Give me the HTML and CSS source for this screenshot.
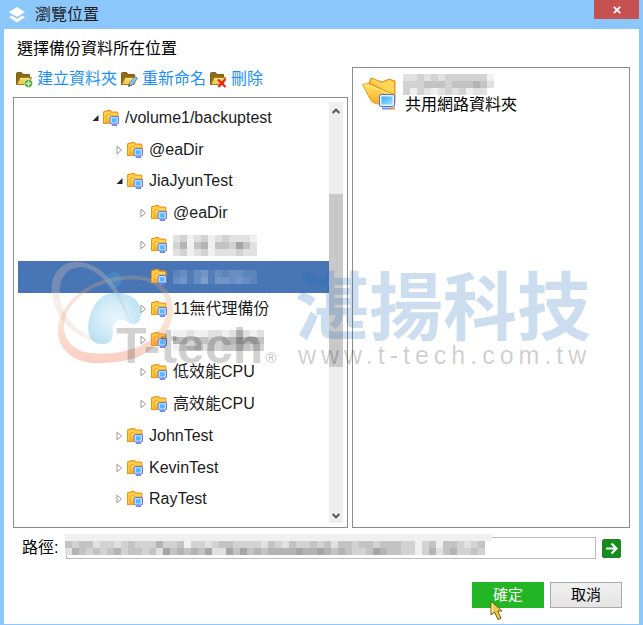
FILE: index.html
```html
<!DOCTYPE html>
<html lang="zh-Hant">
<head>
    <meta charset="UTF-8">
    <meta name="viewport" content="width=device-width, initial-scale=1.0">
    <title>瀏覽位置</title>
    <link rel="stylesheet" href="styles.css">
</head>
<body>
    <!-- Shared icons -->
    <svg class="sprite" aria-hidden="true">
        <defs>
            <linearGradient id="gold" x1="0" y1="0" x2="0" y2="1">
                <stop offset="0" stop-color="#ffe56a"/>
                <stop offset="1" stop-color="#f9a81a"/>
            </linearGradient>
            <linearGradient id="screen" x1="0" y1="0" x2="1" y2="1">
                <stop offset="0" stop-color="#35adf8"/>
                <stop offset="1" stop-color="#9fe2ff"/>
            </linearGradient>
        </defs>
        <symbol id="shared" viewBox="0 0 16 16">
            <path d="M.6 13.400V2.600q0-1.200 1.200-1.200h1.700l.8-.8h3l.9 1.600h5.600q1 0 1 1V13.400z" fill="#ffd24a" stroke="#ef9419" stroke-width="1.200"/>
            <path d="M3.200 13.500V6q0-1.200 1.200-1.200h3L8.300 6h7v7.500z" fill="url(#gold)" stroke="#f0a020"/>
            <rect x="7" y="6.500" width="8.500" height="7.500" rx="1.500" fill="#c9d6ff" stroke="#5b78e0"/>
            <rect x="9" y="8.300" width="4.600" height="4" fill="#45bdff"/>
            <path d="M9 15.200h5" stroke="#6c83e0" stroke-width="1.600"/>
        </symbol>
        <symbol id="folder" viewBox="0 0 16 16">
            <path d="M.5 13.500V2.500q0-1 1-1h4l1.500 2h6.500v3L11 13.500z" fill="#8d6a17" stroke="#80601a"/>
            <path d="M1 13.500L4 6.500h11.500L13 13.500z" fill="#f2cf58" stroke="#a47c1c"/>
            <path d="M4.800 7.800h8.500" stroke="#fff0a9"/>
        </symbol>
        <symbol id="closed" viewBox="0 0 7 10">
            <path d="M1 1.200v7.600L5.500 5z" fill="#fff" stroke="#999"/>
        </symbol>
        <symbol id="opened" viewBox="0 0 7 10">
            <path d="M6.500 2v6H.5z" fill="#262626"/>
        </symbol>
    </svg>

    <div class="window">
        <header class="titlebar">
            <svg class="app-icon" viewBox="0 0 16 16" aria-hidden="true">
                <path d="M8 0l8 5-8 5-8-5z" fill="#fff"/>
                <path d="M2.500 8.500L0 10.200 8 15.500l8-5.300-2.500-1.700L8 12z" fill="#fff"/>
            </svg>
            <h1>瀏覽位置</h1>
            <button class="close-btn" type="button" aria-label="關閉">
                <svg viewBox="0 0 8 8"><path d="M.8.8l6.400 6.400M7.200.8L.8 7.200" stroke="#fff" stroke-width="1.800"/></svg>
            </button>
        </header>

        <main class="content">
            <div class="browser">
                <section class="source">
                    <h2>選擇備份資料所在位置</h2>
                    <nav class="toolbar">
                        <a href="#">
                            <svg viewBox="0 0 17 17" aria-hidden="true"><use href="#folder" width="16" height="16"/><circle cx="12.500" cy="12.500" r="4" fill="#2fa51d" stroke="#fff" stroke-width=".6"/><path d="M12.500 9.800v5.400M9.800 12.500h5.400" stroke="#dfffc9" stroke-width="1.600"/></svg>建立資料夾</a>
                        <a href="#">
                            <svg viewBox="0 0 17 17" aria-hidden="true"><use href="#folder" width="16" height="16"/><path d="M7.500 15.500l1-3.500 5.500-6.500 2.500 2-5.500 6.700z" fill="#8ec5ee" stroke="#53789c" stroke-width=".8"/><path d="M7.500 15.500l.8-2.500 1.700 1.300z" fill="#444"/></svg>重新命名</a>
                        <a href="#">
                            <svg viewBox="0 0 17 17" aria-hidden="true"><use href="#folder" width="16" height="16"/><path d="M8 8.500l7.500 7.500M15.500 8L8.500 16" stroke="#ee2414" stroke-width="2.200"/></svg>刪除</a>
                    </nav>
                    <div class="tree-panel">
                        <div class="tree-view">
                            <ul class="tree">
                                <li class="level-1"><svg class="arrow"><use href="#opened"/></svg><svg class="icon"><use href="#shared"/></svg>/volume1/backuptest</li>
                                <li class="level-2"><svg class="arrow"><use href="#closed"/></svg><svg class="icon"><use href="#shared"/></svg>@eaDir</li>
                                <li class="level-2"><svg class="arrow"><use href="#opened"/></svg><svg class="icon"><use href="#shared"/></svg>JiaJyunTest</li>
                                <li class="level-3"><svg class="arrow"><use href="#closed"/></svg><svg class="icon"><use href="#shared"/></svg>@eaDir</li>
                                <li class="level-3"><svg class="arrow"><use href="#closed"/></svg><svg class="icon"><use href="#shared"/></svg><svg class="mosaic" data-cells="edfedfedeeef dbfcbfccdace edfedfeeedee"></svg></li>
                                <li class="level-3 selected"><svg class="arrow"></svg><svg class="icon"><use href="#shared"/></svg><svg class="mosaic" data-cells="edfdcfdeddee dcfdbfccdcde"></svg></li>
                                <li class="level-3"><svg class="arrow"><use href="#closed"/></svg><svg class="icon"><use href="#shared"/></svg>11無代理備份</li>
                                <li class="level-3"><svg class="arrow"><use href="#closed"/></svg><svg class="icon"><use href="#shared"/></svg><svg class="mosaic" data-cells="ffeffeefedefe bcdccddcbabbc fedceddccccdd"></svg></li>
                                <li class="level-3"><svg class="arrow"><use href="#closed"/></svg><svg class="icon"><use href="#shared"/></svg>低效能CPU</li>
                                <li class="level-3"><svg class="arrow"><use href="#closed"/></svg><svg class="icon"><use href="#shared"/></svg>高效能CPU</li>
                                <li class="level-2"><svg class="arrow"><use href="#closed"/></svg><svg class="icon"><use href="#shared"/></svg>JohnTest</li>
                                <li class="level-2"><svg class="arrow"><use href="#closed"/></svg><svg class="icon"><use href="#shared"/></svg>KevinTest</li>
                                <li class="level-2"><svg class="arrow"><use href="#closed"/></svg><svg class="icon"><use href="#shared"/></svg>RayTest</li>
                                <li class="level-2"><svg class="arrow"></svg><svg class="icon"><use href="#shared"/></svg></li>
                            </ul>
                        </div>
                        <div class="scrollbar" aria-hidden="true">
                            <svg viewBox="0 0 8 6"><path d="M.7 5L4 1.700 7.300 5" fill="none" stroke="#505050" stroke-width="1.900"/></svg>
                            <div class="track"><div class="thumb"></div></div>
                            <svg viewBox="0 0 8 6"><path d="M.7 1L4 4.300 7.300 1" fill="none" stroke="#505050" stroke-width="1.900"/></svg>
                        </div>
                    </div>
                </section>

                <section class="details">
                    <svg class="share-icon" viewBox="0 0 34 34" aria-hidden="true">
                        <path d="M7 7l2-5 11 4 7-3 6 2v22l-5 1z" fill="#f6ae2c" stroke="#e3901c"/>
                        <path d="M9 6l1-3 10 4 7-3 5 2v13z" fill="#ffd557"/>
                        <path d="M.7 8.500l5-1 26.500 11V30l-19-2.500Q9 26 7 21z" fill="url(#gold)" stroke="#e99a20"/>
                        <path d="M2 9.500l4-.7 25 10.500" fill="none" stroke="#fff09d"/>
                        <rect x="17.500" y="18.500" width="15" height="12" rx="1.500" fill="#e9f2ff" stroke="#5572d8"/>
                        <rect x="19.500" y="20.500" width="11" height="8" fill="url(#screen)"/>
                        <path d="M20 32.500h9" stroke="#7c90dc" stroke-width="2"/>
                        <path d="M28 32.500h5" stroke="#e8932c" stroke-width="2"/>
                    </svg>
                    <div class="share-text">
                        <svg class="mosaic" data-cells="eedededdddddf dddcccdcccbce dfdefededfee"></svg>
                        <p>共用網路資料夾</p>
                    </div>
                </section>
            </div>

            <form class="path-row">
                <label for="path">路徑:</label>
                <div class="path-field">
                    <input type="text" id="path">
                    <svg class="mosaic" data-cells="fffffffffffffffffffffffffffffffffffffffffffffffffffffffffffff cdcceddedcdddbddcfddedccddddecdecddcdceccdccdcccddfdcfccdedc ebcdcdcbdccdceacbcbcaeeacacbcbbbbabbabcbcddcabccddfdbecbddcd"></svg>
                </div>
                <button class="go-btn" type="button" aria-label="前往">
                    <svg viewBox="0 0 13 13"><path d="M1 6.500h10M6.500 1.500l5 5-5 5" fill="none" stroke="#fff" stroke-width="2.200"/></svg>
                </button>
            </form>

            <div class="actions">
                <button class="ok-btn" type="button">確定</button>
                <button class="cancel-btn" type="button">取消</button>
                <svg class="pointer" viewBox="0 0 14 21" aria-hidden="true">
                    <path d="M1 1v14l3.500-3 3.500 7.500 3-1.300L7.700 11H12z" fill="#efcb4c" stroke="#6f5a20"/>
                    <path d="M2.200 3.500v9" stroke="#fff3b0"/>
                </svg>
            </div>
        </main>

        <svg class="watermark" viewBox="0 0 560 120" aria-hidden="true">
            <defs>
                <linearGradient id="ring" x1="0" y1="0" x2="0" y2="1">
                    <stop offset="0" stop-color="#d2a878" stop-opacity=".3"/>
                    <stop offset=".5" stop-color="#f0a070" stop-opacity=".3"/>
                    <stop offset="1" stop-color="#ee6848" stop-opacity=".32"/>
                </linearGradient>
                <radialGradient id="drop">
                    <stop offset="0" stop-color="#80c8ee" stop-opacity=".18"/>
                    <stop offset="1" stop-color="#3aaade" stop-opacity=".32"/>
                </radialGradient>
            </defs>
            <path class="ring-pale" d="M2 42C0 24 12 11 27 12C50 12 67 34 75 56L82 76C70 50 54 20 32 17C14 17 8 32 10 48C14 70 30 86 55 92C30 92 4 72 2 42z"/>
            <path fill="url(#ring)" d="M8 82C6 58 35 32 62 28C74 25 86 25 95 27C112 31 124 44 123 62C121 82 108 98 88 107C70 113 56 113 42 113C22 111 8 98 8 82zM14 76C14 92 26 102 42 103C62 105 78 101 90 96C106 88 118 72 117 56C115 42 106 32 90 30C50 26 14 50 14 76z" fill-rule="evenodd"/>
            <circle cx="64" cy="30" r="8" fill="url(#drop)"/>
            <path fill="url(#drop)" d="M58 44C64 42 70 42 75 44C84 46 90 52 91 62C91 70 89 74 83 74C78 74 76 69 70 70C64 71 62 77 63 83C63 90 59 95 52 94C44 95 38 88 38 78C39 62 46 48 58 44z"/>
            <text class="brand" x="66" y="113">T-tech</text>
            <text class="mark" x="216" y="113">®</text>
            <text class="company" x="245" y="84">湛揚科技</text>
            <text class="site" x="248" y="114">www.t-tech.com.tw</text>
        </svg>
    </div>

    <script>
        // One 7px cell per hex digit, a lower digit is darker
        const cell = 7;

        document.querySelectorAll('.mosaic').forEach((svg) => {
            const rows = svg.dataset.cells.split(' ');
            svg.setAttribute('width', rows[0].length * cell);
            svg.setAttribute('height', rows.length * cell);

            rows.forEach((row, y) => {
                [...row].forEach((digit, x) => {
                    const rect = document.createElementNS('http://www.w3.org/2000/svg', 'rect');
                    rect.setAttribute('x', x * cell);
                    rect.setAttribute('y', y * cell);
                    rect.setAttribute('width', cell);
                    rect.setAttribute('height', cell);
                    rect.setAttribute('opacity', (16 - parseInt(digit, 16)) / 17);
                    svg.appendChild(rect);
                });
            });
        });
    </script>
</body>
</html>
```
FILE: styles.css
```css
* {
    box-sizing: border-box;
}
body {
    margin: 0;
    font-family: "Liberation Sans", "Noto Sans CJK TC", sans-serif;
    font-size: 16px;
    line-height: 20px;
    color: #1c1c1c;
}
h1, h2, p, ul {
    margin: 0;
    padding: 0;
    font-size: 16px;
    font-weight: normal;
}
svg {
    display: block;
    flex-shrink: 0;
}
button {
    font-family: inherit;
    padding: 0;
    border: none;
}
.sprite {
    position: absolute;
    width: 0;
    height: 0;
}
.window {
    position: relative;
    display: flex;
    flex-direction: column;
    min-height: 100vh;
    padding: 0 4px 1px;
    background-color: #8bc7fa;
}
.titlebar {
    display: flex;
    align-items: center;
    height: 29px;
    padding-left: 5px;
}
.titlebar h1 {
    flex: 1;
    margin-left: 10px;
}
.app-icon {
    width: 16px;
    height: 16px;
}
.close-btn {
    display: flex;
    align-items: center;
    justify-content: center;
    align-self: flex-start;
    width: 45px;
    height: 19px;
    background-color: #c75050;
}
.close-btn svg {
    width: 8px;
    height: 8px;
}
.content {
    flex: 1;
    display: flex;
    flex-direction: column;
    background-color: #fff;
}
.browser {
    flex: 1;
    display: grid;
    grid-template-columns: 335fr 278fr;
    gap: 4px;
    padding: 10px 9px 0;
}
.source {
    display: flex;
    flex-direction: column;
}
.source h2 {
    padding-left: 4px;
    color: #000;
}
.toolbar {
    display: flex;
    gap: 4px;
    padding: 10px 3px 8px;
}
.toolbar a {
    display: flex;
    align-items: center;
    gap: 4px;
    color: #1e8ffa;
    text-decoration: none;
}
.toolbar svg {
    width: 17px;
    height: 17px;
}
.tree-panel {
    flex: 1;
    display: flex;
    padding: 4px;
    border: 1px solid #8c8c8c;
}
.tree-view {
    flex: 1;
    display: flex;
    flex-direction: column;
    overflow: hidden;
}
/* the last row runs on below the visible area */
.tree {
    flex: 1;
    display: grid;
    grid-auto-rows: 1fr;
    margin-bottom: -24px;
    list-style: none;
}
.tree li {
    display: flex;
    align-items: center;
    min-height: 28px;
    white-space: nowrap;
}
.tree .selected {
    background-color: #4775b5;
}
.tree .arrow {
    width: 7px;
    height: 10px;
    margin-right: 4px;
}
.tree .icon {
    width: 16px;
    height: 16px;
    margin-right: 6px;
}
.level-1 {
    padding-left: 74px;
}
.level-2 {
    padding-left: 98px;
}
.level-3 {
    padding-left: 122px;
}
.scrollbar {
    display: flex;
    flex-direction: column;
    align-items: center;
    width: 14px;
    padding: 6px 0 4px;
    background-color: #eee;
}
.scrollbar svg {
    width: 8px;
    height: 6px;
}
.track {
    flex: 1;
    width: 100%;
    padding-top: 80px;
}
.thumb {
    height: 173px;
    background-color: #c9c9c9;
}
.details {
    display: flex;
    align-items: flex-start;
    gap: 7px;
    margin-top: 28px;
    padding: 6px 9px;
    border: 1px solid #8c8c8c;
}
.share-icon {
    width: 34px;
    height: 34px;
    margin-top: 2px;
}
.share-text p {
    padding-left: 2px;
    color: #000;
}
.mosaic {
    fill: #000;
}
.selected .mosaic {
    fill: #fff;
}
.path-row {
    display: flex;
    align-items: center;
    padding: 9px 18px 0;
    color: #000;
}
.path-field {
    position: relative;
    flex: 1;
    margin: 0 6px 0 8px;
}
.path-field input {
    display: block;
    width: 100%;
    height: 22px;
    padding: 0 4px;
    border: 1px solid #bbb;
    font-size: 16px;
}
.path-field .mosaic {
    position: absolute;
    left: -1px;
    top: -3px;
    background-color: #fff;
}
.go-btn {
    display: flex;
    align-items: center;
    justify-content: center;
    width: 19px;
    height: 19px;
    border: 1px solid #2b7a2f;
    border-radius: 2px;
    background-color: #138d1c;
}
.go-btn svg {
    width: 13px;
    height: 13px;
}
.actions {
    position: relative;
    display: flex;
    justify-content: flex-end;
    gap: 6px;
    padding: 23px 17px 16px;
}
.actions button {
    width: 72px;
    height: 26px;
    font-size: 15px;
    line-height: 20px;
}
.ok-btn {
    background-color: #22b624;
    color: #fff;
}
.actions .cancel-btn {
    border: 1px solid #aaa;
    background-image: linear-gradient(#f0f0f0, #e4e4e4);
    color: #000;
}
.pointer {
    position: absolute;
    right: 135px;
    bottom: 3px;
    width: 14px;
    height: 21px;
}
.watermark {
    position: absolute;
    left: 50px;
    top: 250px;
    width: 560px;
    height: 120px;
    overflow: visible;
    pointer-events: none;
}
.ring-pale {
    fill: rgba(225, 200, 180, 0.3);
}
.brand {
    font-size: 50px;
    font-weight: bold;
    fill: rgba(0, 0, 0, 0.18);
}
.mark {
    font-size: 14px;
    fill: rgba(0, 0, 0, 0.3);
}
.company {
    font-family: "Noto Sans CJK TC", sans-serif;
    font-size: 74px;
    font-weight: bold;
    fill: rgba(30, 110, 185, 0.23);
}
.site {
    font-size: 25px;
    letter-spacing: 5px;
    fill: rgba(0, 0, 0, 0.2);
}
```
